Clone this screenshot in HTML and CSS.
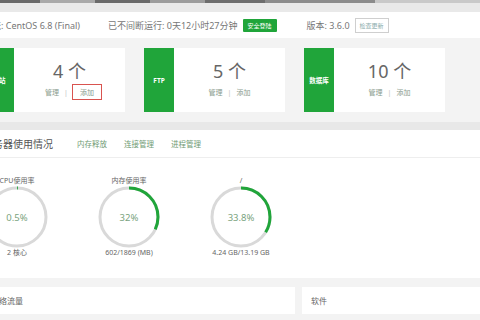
FILE: index.html
```html
<!DOCTYPE html>
<html lang="zh-CN">
<head>
<meta charset="utf-8">
<title>宝塔面板 首页</title>
<link rel="stylesheet" href="styles.css">
</head>
<body>
<div class="topbar">
  <span class="tb tb-a"></span><span class="tb tb-b"></span><span class="tb tb-a2"></span><span class="tb tb-c"></span><span class="tb tb-a3"></span><span class="tb tb-d"></span><span class="tb tb-a4"></span>
</div>
<div class="info">
  <span class="i-os">系统: CentOS 6.8 (Final)</span>
  <span class="i-run">已不间断运行: 0天12小时27分钟</span>
  <span class="badge">安全登陆</span>
  <span class="i-ver">版本: 3.6.0</span>
  <span class="upd">检查更新</span>
</div>

<div class="cards">
  <div class="card">
    <div class="tag">网站</div>
    <div class="cbody">
      <div class="num">4 个</div>
      <div class="links"><span>管理</span><span class="sep">|</span><span class="hl">添加</span></div>
    </div>
  </div>
  <div class="card">
    <div class="tag">FTP</div>
    <div class="cbody">
      <div class="num">5 个</div>
      <div class="links"><span>管理</span><span class="sep">|</span><span>添加</span></div>
    </div>
  </div>
  <div class="card">
    <div class="tag">数据库</div>
    <div class="cbody">
      <div class="num">10 个</div>
      <div class="links"><span>管理</span><span class="sep">|</span><span>添加</span></div>
    </div>
  </div>
</div>

<div class="server">
  <div class="s-head">
    <span class="s-title">服务器使用情况</span>
    <span class="s-link s-first">内存释放</span>
    <span class="s-link">连接管理</span>
    <span class="s-link">进程管理</span>
  </div>
  <div class="gauges">
    <div class="gauge">
      <div class="g-label">CPU使用率</div>
      <svg class="ring" viewBox="0 0 62 62" width="62" height="62">
        <circle cx="31" cy="31" r="29" class="ring-bg"/>
        <circle cx="31" cy="31" r="29" class="ring-fg" stroke-dasharray="0.9 182.2" transform="rotate(-90 31 31)"/>
        <text x="31" y="34.5" class="ring-txt">0.5%</text>
      </svg>
      <div class="g-sub">2 核心</div>
    </div>
    <div class="gauge">
      <div class="g-label">内存使用率</div>
      <svg class="ring" viewBox="0 0 62 62" width="62" height="62">
        <circle cx="31" cy="31" r="29" class="ring-bg"/>
        <circle cx="31" cy="31" r="29" class="ring-fg" stroke-dasharray="58.3 182.2" transform="rotate(-90 31 31)"/>
        <text x="31" y="34.5" class="ring-txt">32%</text>
      </svg>
      <div class="g-sub">602/1869 (MB)</div>
    </div>
    <div class="gauge">
      <div class="g-label">/</div>
      <svg class="ring" viewBox="0 0 62 62" width="62" height="62">
        <circle cx="31" cy="31" r="29" class="ring-bg"/>
        <circle cx="31" cy="31" r="29" class="ring-fg" stroke-dasharray="61.6 182.2" transform="rotate(-90 31 31)"/>
        <text x="31" y="34.5" class="ring-txt">33.8%</text>
      </svg>
      <div class="g-sub">4.24 GB/13.19 GB</div>
    </div>
  </div>
</div>

<div class="bottom">
  <div class="b-left">网络流量</div>
  <div class="b-right">软件</div>
</div>
</body>
</html>
```

FILE: styles.css
```css
html, body {
  margin: 0;
  padding: 0;
}
body {
  width: 480px;
  height: 320px;
  overflow: hidden;
  background: #f3f3f3;
  font-family: "Noto Sans", "Noto Sans CJK SC", sans-serif;
  color: #666;
}

.topbar {
  display: flex;
  height: 3px;
  background: #727272;
  border-bottom: 9px solid #e9e9e9;
}
.tb { display: block; height: 3px; }
.tb-a { width: 40px; background: #6a6a6a; }
.tb-b { width: 55px; background: #a9a9a9; }
.tb-a2 { width: 55px; background: #6a6a6a; }
.tb-c { width: 55px; background: #9c9c9c; }
.tb-a3 { width: 60px; background: #6d6d6d; }
.tb-d { width: 110px; background: #8c8c8c; }
.tb-a4 { flex: 1; background: #c9c9c9; }

.info {
  display: flex;
  align-items: center;
  height: 26px;
  background: #fff;
  font-size: 9px;
  color: #777;
  white-space: nowrap;
}
.i-os { margin-left: -17px; }
.i-run { margin-left: 28px; }
.badge {
  margin-left: 5px;
  background: #20a53a;
  color: #fff;
  font-size: 6px;
  padding: 2px 5px;
  border-radius: 1px;
}
.i-ver { margin-left: 30px; }
.upd {
  margin-left: 5px;
  border: 1px solid #cfcfcf;
  color: #8aa;
  font-size: 6px;
  padding: 2px 4px;
}

.cards {
  display: flex;
  gap: 19px;
  margin: 10px 0 0 -16px;
}
.card {
  display: flex;
  width: 141px;
  height: 64px;
  background: #fff;
  flex: none;
}
.tag {
  width: 30px;
  background: #20a53a;
  color: #fff;
  font-size: 6.5px;
  font-weight: bold;
  display: flex;
  align-items: center;
  justify-content: center;
  white-space: nowrap;
}
.cbody {
  flex: 1;
  display: flex;
  flex-direction: column;
  align-items: center;
  padding-top: 11px;
}
.num {
  font-size: 18px;
  line-height: 24px;
  color: #666;
}
.links {
  display: flex;
  align-items: center;
  margin-top: 4px;
  font-size: 7px;
  color: #8a9c8e;
}
.sep { margin: 0 5px; color: #bbb; }
.hl {
  border: 1px solid #d9534f;
  padding: 2px 7px;
  margin: -3px -8px -3px -1px;
}

.server {
  margin-top: 10px;
  border-top: 8px solid #e8e8e8;
  background: #fff;
  height: 148px;
}
.s-head {
  display: flex;
  align-items: center;
  height: 27px;
  border-bottom: 1px solid #eee;
  white-space: nowrap;
}
.s-title {
  margin-left: -17px;
  font-size: 10px;
  color: #555;
}
.s-link {
  font-size: 7.5px;
  color: #6f9b74;
  margin-left: 17px;
}
.s-first { margin-left: 24px; }

.gauges {
  display: flex;
  margin-left: -39px;
}
.gauge {
  width: 112px;
  display: flex;
  flex-direction: column;
  align-items: center;
  flex: none;
}
.g-label {
  margin-top: 18px;
  font-size: 7px;
  line-height: 10px;
  color: #666;
  white-space: nowrap;
}
.ring { display: block; }
.ring-bg {
  fill: none;
  stroke: #d9d9d9;
  stroke-width: 3;
}
.ring-fg {
  fill: none;
  stroke: #20a53a;
  stroke-width: 3;
}
.ring-txt {
  font-family: "Noto Sans", sans-serif;
  font-size: 9.5px;
  fill: #7aa37e;
  text-anchor: middle;
}
.g-sub {
  font-size: 7px;
  line-height: 10px;
  color: #666;
  white-space: nowrap;
}

.bottom {
  display: flex;
  gap: 7px;
  margin-top: 9px;
  height: 27px;
}
.b-left, .b-right {
  background: #fff;
  display: flex;
  align-items: center;
  font-size: 8px;
  color: #666;
  white-space: nowrap;
}
.b-left {
  width: 304px;
  margin-left: -9px;
  flex: none;
}
.b-right {
  flex: 1;
  padding-left: 9px;
}
```
